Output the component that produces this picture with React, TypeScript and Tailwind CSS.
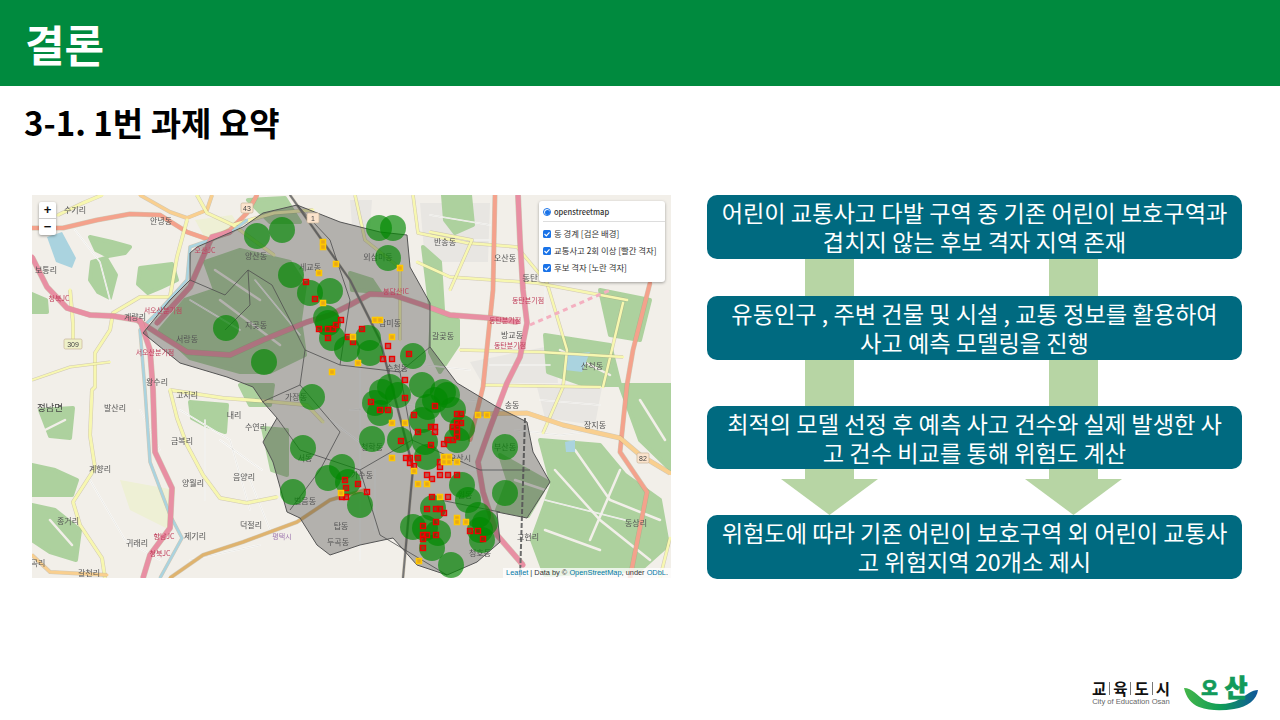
import React from "react";

type Label = [string, number, number];

const circles: [number, number][] = [
  [257, 236], [282, 230], [291, 275], [310, 293], [330, 291], [326, 318], [328, 323], [332, 338], [347, 349], [226, 328],
  [264, 362], [312, 397], [379, 228], [393, 228], [388, 258], [368, 338], [370, 353], [413, 356], [390, 387], [382, 392],
  [422, 385], [443, 392], [375, 403], [380, 413], [398, 395], [372, 439], [400, 440], [428, 407], [435, 400], [447, 395],
  [453, 410], [422, 420], [425, 442], [427, 457], [457, 440], [462, 428], [505, 447], [505, 493], [462, 485], [468, 500],
  [478, 515], [485, 523], [482, 540], [480, 530], [433, 508], [413, 527], [425, 528], [438, 533], [432, 548], [451, 565],
  [360, 505], [348, 482], [303, 448], [293, 492], [328, 478], [342, 467],
];

const reds: [number, number][] = [
  [371, 402], [380, 410], [388, 410], [405, 398], [435, 406], [414, 415], [457, 414], [461, 414], [457, 423], [461, 423],
  [453, 427], [457, 427], [457, 432], [457, 437], [448, 440], [453, 440], [444, 444], [431, 427], [435, 427], [435, 432],
  [418, 432], [401, 441], [431, 445], [418, 458], [406, 458], [410, 458], [410, 463], [414, 466], [440, 462], [440, 467],
  [440, 475], [448, 475], [457, 475], [427, 475], [432, 479], [432, 497], [448, 497], [427, 509], [436, 509], [440, 509],
  [444, 513], [436, 522], [423, 526], [423, 535], [427, 535], [423, 539], [436, 535], [423, 548], [470, 531], [478, 531],
  [483, 539], [358, 484], [367, 492], [345, 480], [346, 488], [342, 497], [346, 497], [306, 282], [315, 299], [319, 329],
  [328, 329], [333, 329], [336, 325], [341, 320], [328, 338], [348, 337], [362, 329], [388, 346], [383, 359], [392, 359],
  [409, 354], [405, 380], [353, 342],
];

const yellows: [number, number][] = [
  [323, 242], [323, 247], [336, 264], [319, 273], [323, 303], [332, 372], [400, 268], [375, 320], [380, 320], [392, 337],
  [353, 337], [358, 363], [341, 493], [392, 423], [405, 423], [392, 458], [478, 415], [487, 415], [444, 457], [449, 457],
  [444, 462], [449, 462], [457, 462], [414, 471], [418, 484], [427, 484], [440, 497], [457, 518], [457, 522], [466, 522],
  [419, 561],
];

const forests = [
  "M90 237 L112 242 L130 247 L125 253 L108 256 L96 250 Z",
  "M92 262 L106 258 L116 275 L110 298 L98 292 L90 280 Z",
  "M140 268 L172 264 L177 280 L160 288 L148 293 L138 284 Z",
  "M32 294 L46 300 L47 312 L32 312 Z",
  "M205 262 L240 250 L290 262 L305 285 L300 320 L305 355 L270 372 L240 372 L190 358 L160 330 L185 300 L215 290 Z",
  "M248 200 L285 198 L300 222 L270 222 Z",
  "M423 247 L440 262 L443 310 L430 305 Z",
  "M350 273 L372 280 L380 292 L352 290 Z",
  "M443 195 L470 195 L473 225 L455 233 L445 220 Z",
  "M432 310 L458 320 L458 345 L440 372 L430 352 Z",
  "M190 402 L227 405 L225 432 L205 425 L192 418 Z",
  "M240 385 L273 385 L270 405 L250 405 Z",
  "M263 428 L287 430 L287 475 L272 470 Z",
  "M40 410 L73 408 L70 438 L50 436 Z",
  "M32 465 L55 470 L77 480 L72 495 L32 495 Z",
  "M32 505 L55 510 L80 530 L76 560 L50 552 L32 540 Z",
  "M500 455 L548 482 L528 516 L497 510 L508 480 Z",
  "M540 440 L600 445 L625 475 L660 500 L668 545 L640 570 L545 575 L532 540 L552 485 Z",
  "M620 385 L671 385 L671 470 L640 440 Z",
  "M545 335 L610 345 L620 385 L585 385 L548 372 Z",
  "M600 290 L650 300 L640 340 L610 335 Z",
];

const blocks =
  "M420 203 L490 203 L488 262 L425 262 Z M470 362 L555 345 L558 383 L482 383 Z M545 205 L600 210 L605 275 L560 275 Z M537 387 L602 387 L595 425 L545 418 Z M350 200 L372 200 L370 228 L352 225 Z";

const streets =
  "M75 230 L100 262 L110 300 M180 410 L230 440 L250 510 M205 420 L205 500 M90 480 L125 540 L160 560 M220 440 L262 470 M545 250 L545 320 M515 430 L560 435 L600 430 M545 500 L625 520 M360 360 L360 560 M380 360 L470 370 M375 470 L375 530 M430 470 L500 470 M350 410 L480 400 M330 420 L370 450 M440 240 L490 240 M430 215 L490 225 M550 225 L600 235 M550 255 L600 260 M490 365 L550 365 M540 400 L600 405 M255 280 L300 335 M190 300 L240 330 M140 410 L160 450 M250 480 L270 530 M190 560 L260 545";

const tracks =
  "M555 470 L600 520 L650 560 M575 450 L610 500 L660 520 M545 530 L600 550 M620 470 L590 540 M560 350 L610 375 M640 400 L665 440 M515 480 L545 490 M50 520 L72 545 M45 430 L65 420 M220 300 L280 345 M215 270 L260 300";

const roads: [string, string, number][] = [
  ["#f4a28c", "M32 228 L63 228 L97 220 L130 214 L160 215 L187 232 L210 240 L230 230 L247 213 L257 195", 4],
  ["#f9cf8f", "M140 195 L170 212 L187 218 L207 210 L212 195", 3],
  ["#f7f7b0", "M58 215 L83 203 L102 195", 3],
  ["#f7f7b0", "M197 195 L207 213 L233 225 L274 255 M233 225 L274 213 L313 210", 3],
  ["#f7f7b0", "M187 220 L177 257 L170 297 L140 297 L113 313 L110 330 L95 353 L95 387 L92 390 L90 435 L95 468 L73 502 L80 525 L102 558 L105 578", 3],
  ["#f7f7b0", "M70 290 L73 323 L73 343", 3],
  ["#f7f7b0", "M32 380 L70 367 L110 362", 2],
  ["#f7f7b0", "M170 390 L223 398 L263 401 L307 405 L323 422", 3],
  ["#f7f7b0", "M170 390 L177 418 L187 445 L203 475 L220 498 L247 503 L277 497", 3],
  ["#f9cf8f", "M32 555 L50 572 L107 575", 3],
  ["#dfb36e", "M170 578 L203 555 L243 542 L297 522 L330 500 L365 490", 3],
  ["#f7f7b0", "M413 195 L418 233 L467 243 L517 247 L547 283 L567 350 L563 387 L543 433", 2.5],
  ["#f7f7b0", "M417 262 L450 277 L537 283 L627 300 M623 303 L603 387", 2.5],
  ["#f7f7b0", "M460 350 L540 352 L623 357", 2.5],
  ["#f7f7b0", "M483 385 L600 387 M670 538 L660 578", 2.5],
  ["#f7f7b0", "M355 195 L365 240 L400 268 L400 340 M430 232 L472 240 L450 290", 2.5],
  ["#f4a28c", "M495 195 L493 290 L483 387 L470 440", 4],
  ["#f4a28c", "M650 283 L633 350 L627 385 L620 452 L647 492 L630 578", 4],
  ["#f9cf8f", "M477 414 L527 413 L563 425 L620 438 L640 455 L670 473", 4],
  ["#aad3df", "M247 220 L230 233 L190 247 L187 280 L157 313 L140 330 L145 390 L150 462 L170 515 L182 538 L160 578", 2.5],
  ["#e88fa3", "M32 257 L47 287 L67 308 L90 315 L113 316 L137 320 L163 337 L187 352 L230 355 L263 340 L307 322 L330 315 L350 305 L370 294 L393 295 L423 305 L450 315 L490 318 L517 322", 5],
  ["#e88fa3", "M157 323 L190 287 L203 257 L212 237 L230 232", 5],
  ["#e88fa3", "M518 195 L520 240 L523 290 L527 323 L520 357 L507 383 L490 428 L478 462 L483 492 L497 535 L523 565", 5],
  ["#e88fa3", "M140 320 L150 350 L153 390 L155 452 L172 488 L170 528 L150 555 L143 578", 5],
  ["#777", "M290 195 L350 280 L380 340 L413 468 L403 578", 2],
];

const labels: Label[] = [
  ["수기리", 75, 210], ["안녕동", 161, 221], ["양산동", 256, 256], ["보통리", 46, 270], ["지곶동", 256, 325], ["서랑동", 187, 339],
  ["왕수리", 157, 382], ["발산리", 115, 408], ["고지리", 187, 395], ["내리", 234, 415], ["수연리", 256, 427], ["금복리", 182, 441],
  ["계향리", 100, 469], ["가장동", 296, 397], ["서동", 305, 458], ["양월리", 193, 483], ["음양리", 244, 477], ["벌음동", 305, 501],
  ["덕절리", 251, 525], ["제기리", 195, 536], ["종거리", 68, 521], ["귀래리", 137, 543], ["갈천리", 89, 573], ["곡리", 38, 563],
  ["탑동", 341, 526], ["두곡동", 338, 542], ["외삼미동", 378, 257], ["세교동", 310, 267], ["반송동", 445, 242], ["오산동", 505, 258],
  ["갈곶동", 443, 336], ["방교동", 512, 335], ["수청동", 397, 368], ["삼미동", 390, 323], ["산척동", 592, 366], ["송동", 512, 405],
  ["장지동", 595, 425], ["동상리", 636, 523], ["고현리", 528, 537], ["청학동", 372, 447], ["가수동", 362, 475], ["부산동", 505, 447],
  ["오산시", 460, 458], ["원동", 465, 495], ["청호동", 480, 553], ["계량리", 135, 317],
];

const redLabels: Label[] = [
  ["오산JC", 205, 250], ["청북JC", 59, 298], ["서오산분기점", 163, 310], ["서오산분기점", 155, 352], ["동탄분기점", 505, 320],
  ["동탄분기점", 528, 300], ["동탄분기점", 510, 345], ["향남JC", 164, 536], ["청북JC", 160, 553], ["봉담산IC", 396, 291],
];

const shields: Label[] = [["43", 247, 208], ["1", 313, 218], ["309", 73, 344], ["82", 643, 458]];

function OsmMap() {
  return (
    <svg viewBox="32 195 639 383" className="block h-full w-full blur-[0.5px]">
      <rect x="32" y="195" width="639" height="383" fill="#f2efe9" />
      <path d="M47 237 L62 232 L76 258 L72 268 L56 262 Z" fill="#aad3df" />
      <path d="M195 220 L232 215 L240 228 L205 238 Z" fill="#eef0d5" />
      <path d="M120 480 L175 490 L170 530 L130 510 Z" fill="#eef0d5" />
      <path d={blocks} fill="#e8e6e2" />
      {forests.map((d, i) => (
        <path key={i} d={d} fill="#add19e" stroke="#add19e" strokeWidth="4" strokeLinejoin="round" />
      ))}
      <path d={tracks} fill="none" stroke="#f2efe9" strokeWidth="2.5" strokeLinecap="round" />
      <path d="M565 355 L590 352 L582 372 L565 370 Z M565 442 L575 440 L575 452 L566 452 Z" fill="#aad3df" />
      <path d={streets} fill="none" stroke="#fff" strokeWidth="1.6" strokeLinecap="round" />
      <path d={streets} fill="none" stroke="#c8c4bc" strokeWidth="0.4" strokeLinecap="round" />
      {roads.map(([color, d, w], i) => (
        <g key={i}>
          <path d={d} stroke="#a89a78" strokeOpacity="0.45" strokeWidth={w + 1} fill="none" strokeLinejoin="round" />
          <path d={d} stroke={color} strokeWidth={w} fill="none" strokeLinejoin="round" strokeLinecap="round" />
        </g>
      ))}
      <path d="M530 325 L610 290" stroke="#f4b0c0" strokeWidth="3" strokeDasharray="5 4" fill="none" />
      <path d="M525 418 L520 578" stroke="#6c6c6c" strokeWidth="2" strokeDasharray="5 2" fill="none" />

      {/* 동 경계 */}
      <path
        d="M190 253 L197 247 L243 227 L263 213 L297 205 L340 222 L380 232 L407 235 L410 267 L430 303 L430 347 L457 383 L497 407 L527 422 L533 452 L550 482 L527 518 L497 512 L500 542 L477 562 L447 575 L417 565 L393 538 L360 545 L330 555 L317 545 L300 518 L287 512 L273 462 L263 442 L277 418 L263 402 L253 387 L227 377 L180 363 L143 333 L170 300 L190 280 Z"
        fill="#3c3c3c"
        fillOpacity="0.34"
        stroke="#555"
        strokeWidth="1"
      />
      <path
        d="M190 280 L225 295 L248 270 L272 285 L290 320 L305 350 L300 385 L262 402 M248 270 L250 305 L225 330 M305 350 L340 365 L400 372 L412 440 L360 470 L300 450 L277 418 M300 385 L340 432 L320 470 L290 510 M412 440 L480 470 L530 470 M340 365 L350 300 L330 240 L297 205 M400 372 L430 347 M360 470 L380 535 M440 500 L500 512 M380 535 L447 575"
        fill="none"
        stroke="#4f4f4f"
        strokeWidth="1"
        strokeOpacity="0.8"
      />

      <g fontFamily="'Noto Sans CJK KR', sans-serif" textAnchor="middle">
        {labels.map(([t, x, y], i) => (
          <text key={i} x={x} y={y + 3} fontSize="8" fill="#555">
            {t}
          </text>
        ))}
        <text x="50" y="411" fontSize="9.5" fill="#444">
          정남면
        </text>
        <text x="282" y="539" fontSize="7" fill="#a07ab0">
          평택시
        </text>
        <text x="530" y="281" fontSize="8.5" fill="#555">
          동탄
        </text>
        {redLabels.map(([t, x, y], i) => (
          <text key={i} x={x} y={y + 3} fontSize="7" fill="#c0405c">
            {t}
          </text>
        ))}
      </g>

      {circles.map(([x, y], i) => (
        <circle key={i} cx={x} cy={y} r="13" fill="#008800" fillOpacity="0.66" />
      ))}
      {reds.map(([x, y], i) => (
        <rect key={i} x={x - 2.5} y={y - 2.5} width="5" height="5" fill="#c00000" fillOpacity="0.5" stroke="#f00000" strokeWidth="1.4" />
      ))}
      {yellows.map(([x, y], i) => (
        <rect key={i} x={x - 2.5} y={y - 2.5} width="5" height="5" fill="#e8a818" stroke="#ffc800" strokeWidth="1.5" />
      ))}

      <g fontFamily="'Liberation Sans', sans-serif" textAnchor="middle">
        {shields.map(([t, x, y], i) => (
          <g key={i}>
            <rect x={x - (t.length > 2 ? 9 : 6)} y={y - 5} width={t.length > 2 ? 18 : 12} height="10" rx="1.5" fill={t === "309" ? "#eef0c8" : "#fbe3cc"} stroke="#c8b49a" strokeWidth="0.7" />
            <text x={x} y={y + 3} fontSize="7" fill="#444">
              {t}
            </text>
          </g>
        ))}
      </g>
    </svg>
  );
}

function LayerRow({ label }: { label: string }) {
  return (
    <div className="flex h-[17px] items-center gap-[3px]">
      <span className="flex h-[8px] w-[8px] shrink-0 items-center justify-center rounded-[1.5px] bg-[#1a73e8]">
        <svg viewBox="0 0 8 8" className="h-[8px] w-[8px]">
          <path d="M1.5 4 L3.3 5.8 L6.5 2.3" stroke="#fff" strokeWidth="1.2" fill="none" />
        </svg>
      </span>
      <span className="whitespace-nowrap">{label}</span>
    </div>
  );
}

function TwoBars({ height }: { height: string }) {
  return (
    <div className={`flex shrink-0 gap-[195px] pl-[98px] ${height}`}>
      <div className="w-[49px] bg-[#b7d5a4]" />
      <div className="w-[49px] bg-[#b7d5a4]" />
    </div>
  );
}

function Arrow() {
  return (
    <div className="flex flex-col items-center">
      <div className="h-[10px] w-[49px] bg-[#b7d5a4]" />
      <svg viewBox="0 0 97 36" className="block h-[36px] w-[97px]">
        <path d="M0 0 H97 L48.5 36 Z" fill="#b7d5a4" />
      </svg>
    </div>
  );
}

function StepBox({ children, short }: { children: React.ReactNode; short?: boolean }) {
  return (
    <div
      className={
        short
          ? "flex h-[63px] w-[535px] shrink-0 items-center justify-center rounded-[10px] bg-[#006a80] text-center text-[23.2px] leading-[29px] text-white"
          : "flex h-[64px] w-[535px] shrink-0 items-center justify-center rounded-[10px] bg-[#006a80] text-center text-[23.2px] leading-[29px] text-white"
      }
    >
      <div>{children}</div>
    </div>
  );
}

export default function App() {
  return (
    <div className="flex h-[720px] w-[1280px] flex-col overflow-hidden bg-white font-['Noto_Sans_CJK_KR','Noto_Sans',sans-serif]">
      <header className="flex h-[86px] shrink-0 items-center bg-[#008a3e] pl-[25px]">
        <h1 className="text-[43px] leading-none font-bold text-white">결론</h1>
      </header>
      <h2 className="mt-[18px] ml-[24px] text-[33px] leading-[36px] font-bold text-black">3-1. 1번 과제 요약</h2>

      <main className="mt-[55px] flex pl-[32px]">
        <div className="relative h-[383px] w-[639px] overflow-hidden">
          <OsmMap />
          <div className="absolute top-[7px] left-[7px] flex w-[17px] flex-col rounded-[2px] bg-white text-center text-[#111] shadow-[0_1px_3px_rgba(0,0,0,0.4)] font-['Liberation_Sans',sans-serif]">
            <div className="h-[17px] border-b border-[#ccc] text-[13px] leading-[16px] font-bold">+</div>
            <div className="h-[16px] text-[13px] leading-[15px] font-bold">−</div>
          </div>
          <div className="absolute top-[6px] left-[507px] h-[81px] w-[126px] rounded-[3px] bg-white pl-[4px] text-[8.4px] text-[#333] shadow-[0_1px_3px_rgba(0,0,0,0.35)]">
            <div className="flex h-[21px] items-center gap-[3px] border-b border-[#ddd] pt-[2px] text-[7.5px] font-medium">
              <span className="flex h-[8px] w-[8px] items-center justify-center rounded-full border border-[#1a73e8]">
                <span className="h-[5px] w-[5px] rounded-full bg-[#1a73e8]" />
              </span>
              <span>openstreetmap</span>
            </div>
            <div className="pt-[3px]">
              <LayerRow label="동 경계 [검은 배경]" />
              <LayerRow label="교통사고 2회 이상 [빨간 격자]" />
              <LayerRow label="후보 격자 [노란 격자]" />
            </div>
          </div>
          <div className="absolute right-0 bottom-0 h-[10px] bg-white/75 px-[3px] text-[7.4px] leading-[10px] whitespace-nowrap text-[#333] font-['Liberation_Sans',sans-serif]">
            <span className="text-[#0078a8]">Leaflet</span> | Data by © <span className="text-[#0078a8]">OpenStreetMap</span>, under <span className="text-[#0078a8]">ODbL</span>.
          </div>
        </div>

        <div className="ml-[36px] flex h-[384px] w-[535px] flex-col">
          <StepBox>
            어린이 교통사고 다발 구역 중 기존 어린이 보호구역과
            <br />
            겹치지 않는 후보 격자 지역 존재
          </StepBox>
          <TwoBars height="h-[37px]" />
          <StepBox>
            유동인구 , 주변 건물 및 시설 , 교통 정보를 활용하여
            <br />
            사고 예측 모델링을 진행
          </StepBox>
          <TwoBars height="h-[46px]" />
          <StepBox short>
            최적의 모델 선정 후 예측 사고 건수와 실제 발생한 사
            <br />
            고 건수 비교를 통해 위험도 계산
          </StepBox>
          <div className="flex h-[46px] shrink-0 gap-[147px] pl-[74px]">
            <Arrow />
            <Arrow />
          </div>
          <StepBox>
            위험도에 따라 기존 어린이 보호구역 외 어린이 교통사
            <br />고 위험지역 20개소 제시
          </StepBox>
        </div>
      </main>

      <footer className="mt-auto mr-[20px] mb-[9px] flex items-center justify-end gap-[14px]">
        <div className="flex flex-col items-center">
          <div className="flex items-center text-[15.5px] leading-[18px] font-bold text-[#111]">
            <span>교</span>
            <span className="mx-[3px] h-[13px] w-px bg-[#777]" />
            <span>육</span>
            <span className="mx-[3px] h-[13px] w-px bg-[#777]" />
            <span>도</span>
            <span className="mx-[3px] h-[13px] w-px bg-[#777]" />
            <span>시</span>
          </div>
          <div className="text-[7.6px] leading-[10px] whitespace-nowrap text-[#666] font-['Liberation_Sans',sans-serif]">City of Education Osan</div>
        </div>
        <svg viewBox="0 0 76 36" className="h-[36px] w-[76px] overflow-visible">
          <defs>
            <linearGradient id="osan" x1="0" y1="0" x2="1" y2="0">
              <stop offset="0" stopColor="#45b649" />
              <stop offset="0.5" stopColor="#0f9d58" />
              <stop offset="1" stopColor="#10569c" />
            </linearGradient>
          </defs>
          <path d="M0 13 C8 13 14 21 20 25 C30 31 46 30 56 24 C62 20 68 15 74 15 C73 24 64 32 50 34 C38 36 26 36 15 32 C7 29 2 22 0 13 Z" fill="url(#osan)" />
          <g fontWeight="900" textAnchor="middle" fill="#129a5a" stroke="#129a5a" strokeWidth="0.7">
            <text x="25.5" y="20" fontSize="18">
              오
            </text>
            <text x="52" y="22" fontSize="25">
              산
            </text>
          </g>
        </svg>
      </footer>
    </div>
  );
}
